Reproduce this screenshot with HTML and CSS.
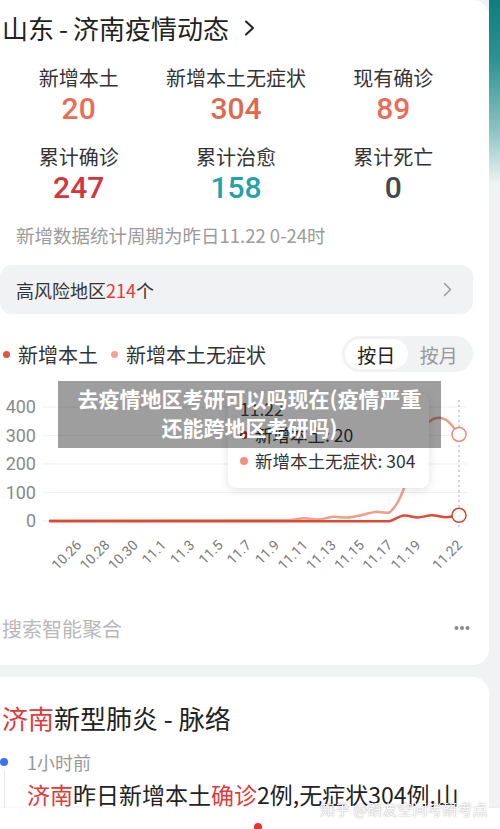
FILE: index.html
```html
<!DOCTYPE html>
<html lang="zh-CN">
<head>
<meta charset="utf-8">
<title>山东-济南疫情动态</title>
<link rel="stylesheet" href="styles.css">
</head>
<body>
<div class="page">
  <main class="feed">
    <section class="card card-stats">
      <h1 class="title">山东<span class="dash">-</span>济南疫情动态<svg class="title-chev" width="11" height="16" viewBox="0 0 11 16"><path d="M2 1.5 L9 8 L2 14.5" fill="none" stroke="#222" stroke-width="2" stroke-linecap="round" stroke-linejoin="round"/></svg></h1>

      <div class="stats">
        <div class="stat"><div class="label">新增本土</div><div class="num c-salmon">20</div></div>
        <div class="stat"><div class="label">新增本土无症状</div><div class="num c-orange">304</div></div>
        <div class="stat"><div class="label">现有确诊</div><div class="num c-salmon">89</div></div>
        <div class="stat"><div class="label">累计确诊</div><div class="num c-red">247</div></div>
        <div class="stat"><div class="label">累计治愈</div><div class="num c-teal">158</div></div>
        <div class="stat"><div class="label">累计死亡</div><div class="num c-dark">0</div></div>
      </div>

      <p class="note">新增数据统计周期为昨日11.22 0-24时</p>

      <div class="risk">
        <span>高风险地区<span class="red">214</span>个</span>
        <svg width="9" height="15" viewBox="0 0 9 15"><path d="M1.5 1.5 L7.5 7.5 L1.5 13.5" fill="none" stroke="#9a9a9a" stroke-width="1.5" stroke-linecap="round" stroke-linejoin="round"/></svg>
      </div>

      <div class="legend-row">
        <div class="legend">
          <span class="lg"><i class="ldot d-red"></i>新增本土</span>
          <span class="lg"><i class="ldot d-salmon"></i>新增本土无症状</span>
        </div>
        <div class="toggle"><span class="opt on">按日</span><span class="opt">按月</span></div>
      </div>

      <div class="chart">
        <svg class="chart-svg" width="489" height="228" viewBox="0 372 489 228">
          <g stroke="#efefef" stroke-width="1">
            <line x1="43" y1="407" x2="467" y2="407"/>
            <line x1="43" y1="435.5" x2="467" y2="435.5"/>
            <line x1="43" y1="464" x2="467" y2="464"/>
            <line x1="43" y1="492.5" x2="467" y2="492.5"/>
            <line x1="43" y1="521" x2="467" y2="521"/>
          </g>
          <g class="yl" text-anchor="end">
            <text x="36" y="413.4">400</text>
            <text x="36" y="441.9">300</text>
            <text x="36" y="470.4">200</text>
            <text x="36" y="498.9">100</text>
            <text x="36" y="527.4">0</text>
          </g>
          <line x1="459" y1="400" x2="459" y2="530" stroke="#a8a8a8" stroke-width="1" stroke-dasharray="2 3"/>
          <path d="M50 520.6 L290 520.1 C294.75 519.75 299.7 518.3 304.5 518.2 C309.3 518.1 313.95 519.85 318.7 519.6 C323.45 519.35 328.3 517 333 516.7 C337.7 516.37 342.3 517.83 347 517.6 C351.7 517.37 356.3 516.25 361 515.3 C365.7 514.35 370.3 512.37 375 511.9 C379.7 511.43 384.65 513.5 389.4 512.5 C394.15 508.8 398.8 501.95 403.5 489.6 C408.2 477.25 412.9 450 417.6 438.4 C422.3 426.77 427.1 422.9 431.8 419.8 C436.5 416.7 441.5 417.37 446 419.8 C450.5 422.2 456.8 431.97 459 434.4" fill="none" stroke="#f29c8a" stroke-width="2.5" stroke-linecap="round" stroke-linejoin="round"/>
          <path d="M50 521.2 L375 521.3 C379.7 521.3 384.65 521.4 389.4 521.2 C394.15 520.23 398.8 516.12 403.5 515.5 C408.2 514.88 412.9 517.53 417.6 517.5 C422.3 517.47 427.1 515.35 431.8 515.3 C436.5 515.25 441.5 517.2 446 517.2 C450.5 517.2 456.8 515.6 459 515.3" fill="none" stroke="#dc4b36" stroke-width="2.5" stroke-linecap="round" stroke-linejoin="round"/>
          <circle cx="459" cy="434.4" r="7" fill="#fff" stroke="#ef8b78" stroke-width="1.5"/>
          <circle cx="459" cy="515.3" r="7" fill="#fff" stroke="#d4452f" stroke-width="1.5"/>
          <g class="xl" text-anchor="end">
            <text x="82.3" y="546" transform="rotate(-45 82.3 546)">10.26</text>
            <text x="110.6" y="546" transform="rotate(-45 110.6 546)">10.28</text>
            <text x="138.8" y="546" transform="rotate(-45 138.8 546)">10.30</text>
            <text x="167.1" y="546" transform="rotate(-45 167.1 546)">11.1</text>
            <text x="195.4" y="546" transform="rotate(-45 195.4 546)">11.3</text>
            <text x="223.7" y="546" transform="rotate(-45 223.7 546)">11.5</text>
            <text x="252" y="546" transform="rotate(-45 252 546)">11.7</text>
            <text x="280.2" y="546" transform="rotate(-45 280.2 546)">11.9</text>
            <text x="308.5" y="546" transform="rotate(-45 308.5 546)">11.11</text>
            <text x="336.8" y="546" transform="rotate(-45 336.8 546)">11.13</text>
            <text x="365.1" y="546" transform="rotate(-45 365.1 546)">11.15</text>
            <text x="393.4" y="546" transform="rotate(-45 393.4 546)">11.17</text>
            <text x="421.6" y="546" transform="rotate(-45 421.6 546)">11.19</text>
            <text x="463" y="546" transform="rotate(-45 463 546)">11.22</text>
          </g>
        </svg>

        <div class="tooltip">
          <div class="tt-date">11.22</div>
          <div class="tt-row"><i class="tdot t-red"></i>新增本土: 20</div>
          <div class="tt-row"><i class="tdot t-salmon"></i>新增本土无症状: 304</div>
        </div>

        <div class="caption">去疫情地区考研可以吗现在(疫情严重<br>还能跨地区考研吗)</div>
      </div>

      <div class="agg">
        <span>搜索智能聚合</span>
        <svg class="more" width="16" height="6" viewBox="0 0 16 6"><circle cx="2.5" cy="3" r="2" fill="#8a8a8a"/><circle cx="8" cy="3" r="2" fill="#8a8a8a"/><circle cx="13.5" cy="3" r="2" fill="#8a8a8a"/></svg>
      </div>
    </section>

    <section class="card card-timeline">
      <h2 class="tl-title"><span class="red">济南</span>新型肺炎 - 脉络</h2>
      <div class="tl-item">
        <div class="rail"><i class="rail-dot"></i><i class="rail-line"></i></div>
        <div class="tl-body">
          <div class="tl-time">1小时前</div>
          <p class="tl-text"><span class="red">济南</span>昨日新增本土<span class="red">确诊</span>2例,无症状304例,山东省卫健委通报最新疫情情况</p>
        </div>
      </div>
    </section>
  </main>
  <aside class="side"></aside>
</div>

<div class="watermark">知乎 @研友空间考研考点</div>
<nav class="bottombar"><i class="nav-dot"></i></nav>
</body>
</html>
```

FILE: styles.css
```css
* { box-sizing: border-box; }

html, body {
  margin: 0;
  padding: 0;
}

body {
  background: #f1f2f4;
  font-family: "Noto Sans CJK SC", "Noto Sans", sans-serif;
  color: #222;
  height: 829px;
  overflow: hidden;
}

.page {
  display: flex;
  align-items: flex-start;
}

.feed {
  width: 489px;
  flex: none;
  display: flex;
  flex-direction: column;
  gap: 12px;
}

.side {
  flex: 1;
  height: 200px;
  background: linear-gradient(180deg, #0e7d7e 0%, #2f9292 30%, #8cc3c3 65%, #eef4f4 92%, #f1f2f4 100%);
}

.card {
  background: #fff;
  border-radius: 0 16px 16px 0;
}

.red { color: #e03a3a; }

/* ---------- stats card ---------- */
.card-stats {
  padding: 10px 0 23px 0;
}

.title {
  margin: 0 0 0 2px;
  font-size: 26px;
  line-height: 36px;
  font-weight: 400;
  color: #222;
  display: flex;
  align-items: center;
}

.title .dash { margin: 0 5px; }

.title-chev { margin-left: 15px; }

.stats {
  width: 472px;
  margin-top: 18px;
  display: grid;
  grid-template-columns: repeat(3, 1fr);
  row-gap: 17px;
}

.stat {
  display: flex;
  flex-direction: column;
  align-items: center;
}

.stat .label {
  font-size: 20px;
  line-height: 28px;
  color: #333;
}

.stat .num {
  font-family: Roboto, "Noto Sans", sans-serif;
  font-weight: 500;
  font-size: 30px;
  line-height: 34px;
}

.c-salmon { color: #eb6c57; }
.c-orange { color: #e1694a; }
.c-red { color: #d7333b; }
.c-teal { color: #21a3aa; }
.c-dark { color: #43484e; }

.note {
  margin: 17px 0 0 16px;
  font-size: 18.5px;
  line-height: 26px;
  color: #9b9b9b;
}

.risk {
  margin: 17px 16px 0 0;
  height: 49px;
  background: #f1f2f4;
  border-radius: 12px;
  padding: 0 21px 0 16px;
  display: flex;
  align-items: center;
  justify-content: space-between;
  font-size: 18px;
  color: #333;
}

.legend-row {
  margin: 22px 16px 0 0;
  height: 36px;
  display: flex;
  align-items: center;
  justify-content: space-between;
}

.legend {
  display: flex;
  align-items: center;
  gap: 13px;
  padding-left: 3px;
}

.lg {
  display: flex;
  align-items: center;
  gap: 8px;
  font-size: 20px;
  color: #333;
}

.ldot {
  width: 7px;
  height: 7px;
  border-radius: 50%;
}

.d-red { background: #e0553c; }
.d-salmon { background: #f4a192; }

.toggle {
  width: 131px;
  height: 36px;
  border-radius: 18px;
  background: #f1f2f4;
  padding: 3px;
  display: flex;
  align-items: center;
}

.opt {
  flex: 1;
  height: 30px;
  border-radius: 15px;
  display: flex;
  align-items: center;
  justify-content: center;
  font-size: 19px;
  color: #999;
}

.opt.on {
  background: #fff;
  color: #222;
}

/* ---------- chart ---------- */
.chart {
  position: relative;
  height: 228px;
}

.chart-svg { display: block; }

.yl text {
  font-family: Roboto, "Noto Sans", sans-serif;
  font-size: 18px;
  fill: #8a8a8a;
}

.xl text {
  font-family: Roboto, "Noto Sans", sans-serif;
  font-size: 14px;
  fill: #7a7a7a;
}

.tooltip {
  position: absolute;
  left: 228px;
  top: 21px;
  width: 201px;
  height: 95px;
  background: #fff;
  border-radius: 8px;
  box-shadow: 0 2px 10px rgba(0, 0, 0, 0.12);
  padding: 3px 0 0 12px;
  font-size: 17.5px;
  line-height: 26px;
  color: #333;
}

.tt-date { color: #444; }

.tt-row {
  display: flex;
  align-items: center;
  gap: 7px;
}

.tdot {
  width: 8px;
  height: 8px;
  border-radius: 50%;
}

.t-red { background: #b23a28; }
.t-salmon { background: #f2907f; }

.caption {
  position: absolute;
  left: 58px;
  top: 9px;
  width: 383px;
  height: 67px;
  padding-top: 3px;
  background: rgba(0, 0, 0, 0.38);
  color: #fff;
  font-weight: 700;
  font-size: 21px;
  line-height: 29px;
  text-align: center;
}

.agg {
  margin: 14px 19px 0 2px;
  height: 28px;
  display: flex;
  align-items: center;
  justify-content: space-between;
  font-size: 20px;
  color: #b8b8b8;
}

/* ---------- timeline card ---------- */
.card-timeline {
  padding: 24px 16px 40px 0;
  height: 260px;
}

.tl-title {
  margin: 0 0 0 2px;
  font-size: 26px;
  line-height: 34px;
  font-weight: 400;
  color: #222;
}

.tl-item {
  margin-top: 14px;
  display: grid;
  grid-template-columns: 27px minmax(0, 1fr);
}

.rail {
  display: flex;
  flex-direction: column;
  align-items: flex-start;
}

.rail-dot {
  margin-top: 9px;
  width: 8px;
  height: 8px;
  border-radius: 50%;
  background: #3d6ff0;
}

.rail-line {
  margin: 4px 0 0 3.5px;
  width: 1px;
  flex: 1;
  background: #e6e6e6;
}

.tl-time {
  font-size: 18px;
  line-height: 26px;
  color: #999;
}

.tl-text {
  margin: 3px 0 0 0;
  font-size: 23px;
  line-height: 32px;
  color: #222;
}

/* ---------- overlays ---------- */
.watermark {
  position: fixed;
  left: 320px;
  top: 799px;
  font-size: 15px;
  line-height: 20px;
  color: rgba(255, 255, 255, 0.92);
  text-shadow: 0 0 1.5px rgba(0, 0, 0, 0.45);
  z-index: 3;
}

.bottombar {
  position: fixed;
  left: 0;
  right: 0;
  bottom: 0;
  height: 21px;
  background: #fff;
  box-shadow: 0 -1px 2px rgba(0, 0, 0, 0.04);
  padding: 15px 0 0 254px;
  overflow: hidden;
  z-index: 2;
}

.nav-dot {
  display: block;
  width: 8px;
  height: 8px;
  border-radius: 50%;
  background: #f0302a;
}
```
